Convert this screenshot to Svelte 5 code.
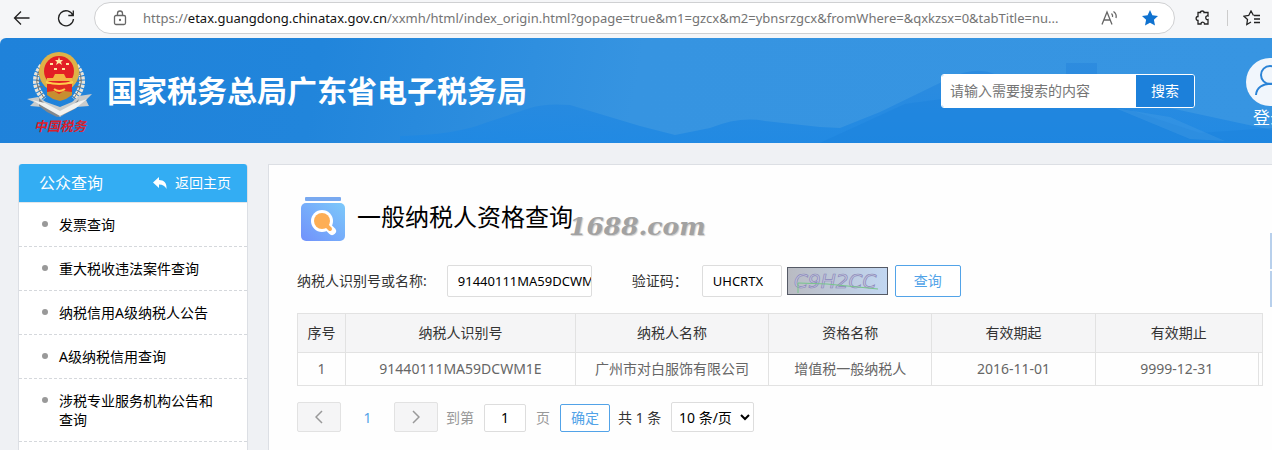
<script>
	const url = {
		scheme: 'https://',
		host: 'etax.guangdong.chinatax.gov.cn',
		path: '/xxmh/html/index_origin.html?gopage=true&m1=gzcx&m2=ybnsrzgcx&fromWhere=&qxkzsx=0&tabTitle=nu...'
	};

	const menu = [
		'发票查询',
		'重大税收违法案件查询',
		'纳税信用A级纳税人公告',
		'A级纳税信用查询',
		'涉税专业服务机构公告和查询'
	];

	const rows = [
		{
			id: '91440111MA59DCWM1E',
			name: '广州市对白服饰有限公司',
			type: '增值税一般纳税人',
			from: '2016-11-01',
			to: '9999-12-31'
		}
	];

	let keyword = $state('');
	let taxpayer = $state('91440111MA59DCWM1E');
	let code = $state('UHCRTX');
	let page = $state('1');
	let size = $state('10');
</script>

<div class="window">
	<!-- Browser toolbar -->
	<div class="toolbar">
		<button class="tool back" aria-label="Back">
			<svg width="18" height="16" viewBox="0 0 18 16"><path d="M16.5 8H1.5M8 1.5L1.5 8L8 14.5" /></svg>
		</button>
		<button class="tool reload" aria-label="Refresh">
			<svg width="18" height="18" viewBox="0 0 18 18"><path d="M16 6.5A7.5 7.5 0 1 0 16.5 10M16.3 1.500V6.5H11.3" /></svg>
		</button>
		<div class="address">
			<svg class="lock" width="14" height="16" viewBox="0 0 14 16">
				<rect x="1.5" y="5.5" width="11" height="9" rx="1.5" />
				<path d="M4.5 5.5V3.5a2.5 2.5 0 0 1 5 0V5.5" />
				<circle cx="7" cy="10" r=".5" />
			</svg>
			<div class="url">{url.scheme}<b>{url.host}</b>{url.path}</div>
			<svg class="read" width="18" height="16" viewBox="0 0 18 16">
				<path d="M1 14.5L6 2L11 14.500M3 10H9M10.500 3.5Q12 5 11.500 7M12.500 1.500Q16 4 15 8" />
			</svg>
			<svg width="18" height="18" viewBox="0 0 18 18">
				<path class="star" d="M9 1l2.4 5.2 5.600.7-4.1 3.9 1.1 5.700L9 13.7l-5 2.8 1.1-5.700L1 6.900l5.600-.7z" />
			</svg>
		</div>
		<button class="tool puzzle" aria-label="Extensions">
			<svg width="16" height="16" viewBox="0 0 16 16">
				<path d="M3 2.500H5.500C5 .5 9.500 .5 9 2.500H13V6C10 5 10 10.500 13 9.500V14H9.500C9.500 11.500 6 11.500 6 14H3V10.500C.5 10.500 .5 6.500 3 6.500Z" />
			</svg>
		</button>
		<span class="divider"></span>
		<button class="tool" aria-label="Favorites">
			<svg width="18" height="16" viewBox="0 0 18 16">
				<path d="M10.5 5.5L8 1L5.7 5.5L1 6.2L4.5 9.5L3.8 14.5L8 12M11 5.5H17M11 9H17M11 12.5H17" />
			</svg>
		</button>
	</div>

	<!-- Banner -->
	<header class="banner">
		<svg class="hills" viewBox="0 0 1272 105" preserveAspectRatio="none" aria-hidden="true">
			<defs>
				<linearGradient id="hill" x1="0" y1="0" x2="0" y2="1">
					<stop offset="0" stop-color="#2c8ade" />
					<stop offset="1" stop-color="#1e88e3" />
				</linearGradient>
			</defs>
			<path fill="url(#hill)" opacity=".85" d="M400 98Q455 97 485 85L530 70Q545 65 570 67L600 76L640 88L675 97L710 90Q740 78 765 83L820 89L840 90L880 74L950 40Q975 28 995 36L1066 38V25H1097V45L1170 70L1272 92V105H400Z" />
			<path fill="#1a7fdb" opacity=".4" d="M820 105L905 66L950 60L1020 70L1080 62L1130 72L1200 95L1272 90V105Z" />
			<path fill="#4fa3e6" opacity=".3" d="M1115 70L1170 79L1225 103L1190 101Z" />
		</svg>

		<a class="brand" href="#home">
			<span class="emblem">
				<svg width="66" height="66" viewBox="0 0 66 66" aria-hidden="true">
					<g fill="none" stroke="#e9e4da" stroke-width="6" stroke-dasharray="3 1">
						<path d="M15 14Q2 30 17 47" />
						<path d="M49 14Q62 30 47 47" />
					</g>
					<g fill="none" stroke="#77756f" stroke-width="1">
						<path d="M14 15Q4 30 17 46M50 15Q60 30 47 46M11 22l5 3M9 28l6 2M10 34l6 1M53 22l-5 3M55 28l-6 2M54 34l-6 1" />
					</g>
					<path fill="#c9cccc" d="M0 47l11-2 8 5 14 5 12-5 7-6 13-2-6 6 3 6-13 1-10 6-6 4-9-5-9-5-12-1 4-4z" />
					<path fill="#83888c" d="M12 46l9 9 12 7 11-7 8-8-4 10-14 7-4 1-10-5-8-6z" />
					<path fill="#f1f2f0" d="M5 48l13 3 15 8 15-8 12-4-11 9-16 8-16-9z" />
					<path fill="#c78e30" d="M20 34h25v9l-6 4-6 2-7-2-6-4z" />
					<circle cx="32" cy="20" r="20" fill="#dfb247" />
					<circle cx="32" cy="19" r="15" fill="#e31f25" />
					<path fill="#ffe9a0" d="M32 5l1 3h3l-2 2 1 3-3-2-3 2 1-3-2-2h3zM23 11h3v2h-3zM39 11h3v2h-3zM27 16h3v2h-3zM35 16h3v2h-3z" />
					<path fill="#f3b542" d="M28 22h9l2 4h6v3H20v-3h6z" />
					<path fill="#e12c22" d="M20 32h25v8l-8-1-5 3-5-3-7 1z" />
					<path fill="none" stroke="#ffcd4a" stroke-width="2" d="M19 30q13 4 27 0M27 37q5 4 11 0" />
				</svg>
				<em>中国税务</em>
			</span>
			<span class="site">国家税务总局广东省电子税务局</span>
		</a>

		<form class="search">
			<input type="text" aria-label="搜索" placeholder="请输入需要搜索的内容" bind:value={keyword} />
			<button type="button">搜索</button>
		</form>

		<a class="login" href="#login">
			<svg width="48" height="48" viewBox="0 0 48 48" aria-hidden="true">
				<circle cx="24" cy="24" r="24" fill="#f1f6fc" />
				<g fill="none" stroke="#2a83d6" stroke-width="2">
					<circle cx="24" cy="17" r="9" />
					<path d="M10 37C11 22 37 22 38 37" />
				</g>
			</svg>
			<span>登录</span>
		</a>
	</header>

	<div class="body">
		<!-- Sidebar -->
		<nav class="sidebar">
			<div class="head">
				<span class="name">公众查询</span>
				<a href="#home">
					<svg width="14" height="12" viewBox="0 0 14 12" aria-hidden="true"><path fill="#fff" d="M6 0v3c5 0 8 3 7.5 9C12 9 10 7.5 6 7.500V11L0 5.5z" /></svg>
					返回主页
				</a>
			</div>
			<ul>
				{#each menu as item}
					<li><a href="#query">{item}</a></li>
				{/each}
			</ul>
		</nav>

		<!-- Query panel -->
		<main class="panel">
			<div class="title">
				<svg width="44" height="44" viewBox="0 0 44 44" aria-hidden="true">
					<defs>
						<linearGradient id="box" x1="0" y1="1" x2="1" y2="0">
							<stop offset="0" stop-color="#7191fb" />
							<stop offset="1" stop-color="#7cc9fa" />
						</linearGradient>
					</defs>
					<rect x="4" y="0" width="36" height="4" rx="1" fill="#79a9f0" />
					<rect x="0" y="6" width="44" height="38" rx="5" fill="url(#box)" />
					<circle cx="21" cy="24" r="11" fill="#fff" />
					<path stroke="#fff" stroke-width="8" stroke-linecap="round" d="M25 28L31 34" />
					<circle cx="21" cy="24" r="8" fill="#fdae55" />
					<path stroke="#fdae55" stroke-width="4" stroke-linecap="round" d="M26 29L29 32" />
				</svg>
				<h1>一般纳税人资格查询</h1>
				<span class="mark">1688.com</span>
			</div>

			<form class="query">
				<label for="taxpayer">纳税人识别号或名称:</label>
				<input id="taxpayer" class="wide" type="text" bind:value={taxpayer} />
				<label for="code">验证码：</label>
				<input id="code" class="short" type="text" bind:value={code} />
				<svg class="captcha" width="101" height="28" viewBox="0 0 101 28" role="img" aria-label="验证码">
					<defs>
						<linearGradient id="noise">
							<stop offset="0" stop-color="#b9bbc2" />
							<stop offset="1" stop-color="#c2d7f2" />
						</linearGradient>
					</defs>
					<rect x=".5" y=".5" width="100" height="27" fill="url(#noise)" stroke="#555a66" />
					<text x="7" y="21">C9H2CC</text>
					<path fill="none" stroke="#78c58c" stroke-width="1" d="M11 26V16L40 17L91 22" />
				</svg>
				<button type="button" class="outline">查询</button>
			</form>

			<table>
				<colgroup>
					<col class="c-index" />
					<col class="c-id" />
					<col class="c-name" />
					<col span="3" />
					<col class="c-gap" />
				</colgroup>
				<thead>
					<tr>
						<th>序号</th>
						<th>纳税人识别号</th>
						<th>纳税人名称</th>
						<th>资格名称</th>
						<th>有效期起</th>
						<th colspan="2">有效期止</th>
					</tr>
				</thead>
				<tbody>
					{#each rows as row, i}
						<tr>
							<td>{i + 1}</td>
							<td>{row.id}</td>
							<td>{row.name}</td>
							<td>{row.type}</td>
							<td>{row.from}</td>
							<td>{row.to}</td>
							<td></td>
						</tr>
					{/each}
				</tbody>
			</table>

			<div class="pager">
				<button class="arrow" aria-label="上一页" disabled>
					<svg width="8" height="14" viewBox="0 0 8 14"><path d="M7 1L1 7L7 13" /></svg>
				</button>
				<a class="current" href="#page">1</a>
				<button class="arrow" aria-label="下一页" disabled>
					<svg width="8" height="14" viewBox="0 0 8 14"><path d="M1 1L7 7L1 13" /></svg>
				</button>
				<label class="muted" for="page">到第</label>
				<input id="page" type="text" bind:value={page} />
				<span class="muted unit">页</span>
				<button class="outline" type="button">确定</button>
				<span class="total">共 1 条</span>
				<select aria-label="每页条数" bind:value={size}>
					<option value="10">10 条/页</option>
					<option value="20">20 条/页</option>
				</select>
			</div>
		</main>
	</div>

	<div class="dock">
		<span></span>
		<span></span>
	</div>
</div>

<style>
	:global(body) {
		margin: 0;
		background: #eff1f4;
	}

	.window {
		position: relative;
		display: flex;
		flex-direction: column;
		overflow: hidden;
		height: 100vh;
		font: 14px/20px 'Noto Sans', 'Noto Sans CJK SC', sans-serif;
		color: #333;
	}

	.window * {
		box-sizing: border-box;
	}

	a {
		color: inherit;
		text-decoration: none;
	}

	button,
	input,
	select {
		margin: 0;
		font: inherit;
	}

	/* Toolbar */
	.toolbar {
		display: flex;
		flex: none;
		align-items: center;
		height: 38px;
		padding: 0 11px 2px 13px;
		background: #f5f6f8;
	}

	.tool {
		display: flex;
		padding: 0;
		border: 0;
		background: none;
	}

	.tool svg,
	.lock,
	.read {
		flex: none;
		fill: none;
		stroke: #222;
		stroke-width: 1.3;
	}

	.reload {
		margin: 0 19px 0 26px;
	}

	.address {
		display: flex;
		flex: 1;
		align-items: center;
		min-width: 0;
		height: 32px;
		padding: 0 15px 0 18px;
		border: 1px solid #cfd0d2;
		border-radius: 16px;
		background: #fff;
	}

	.lock,
	.read {
		stroke: #666;
	}

	.url {
		flex: 1;
		overflow: hidden;
		margin: 0 20px 0 16px;
		color: #747474;
		font-size: 13px;
		white-space: nowrap;
		text-overflow: ellipsis;
	}

	.url b {
		color: #111;
		font-weight: 400;
	}

	.read {
		margin-right: 22px;
	}

	.star {
		fill: #0f72d0;
	}

	.puzzle {
		margin-left: 20px;
	}

	.divider {
		width: 1px;
		height: 16px;
		margin: 0 15px 0 16px;
		background: #ccc;
	}

	/* Banner */
	.banner {
		position: relative;
		display: flex;
		flex: none;
		align-items: center;
		height: 105px;
		border-radius: 6px 0 0 0;
		background: linear-gradient(100deg, #1f82da 0%, #2185db 25%, #3694e1 50%, #3795e2 100%);
	}

	.hills {
		position: absolute;
		inset: 0;
		width: 100%;
		height: 100%;
	}

	.brand,
	.search,
	.login {
		position: relative;
	}

	.brand {
		display: flex;
		align-items: center;
		gap: 14px;
		margin-right: auto;
		padding-left: 27px;
		color: #fff;
	}

	.emblem {
		display: flex;
		flex-direction: column;
		align-items: center;
		padding-top: 4px;
	}

	.emblem em {
		color: #d8202c;
		font-size: 13px;
		font-weight: 700;
		line-height: 16px;
	}

	.site {
		font-size: 30px;
		font-weight: 700;
		line-height: 40px;
		white-space: nowrap;
	}

	.search {
		display: flex;
		width: 254px;
		height: 34px;
		overflow: hidden;
		border: 1px solid #fff;
		border-radius: 3px;
	}

	.search input {
		flex: 1;
		min-width: 0;
		padding: 0 8px;
		border: 0;
		background: #fff;
	}

	.search input::placeholder {
		color: #757575;
	}

	.search button {
		width: 58px;
		padding: 0;
		border: 0;
		background: #1c80da;
		color: #fff;
	}

	.login {
		display: flex;
		flex-direction: column;
		align-items: center;
		margin: 0 -22px 0 51px;
		padding-top: 6px;
		color: #fff;
		font-size: 17px;
		line-height: 24px;
	}

	/* Sidebar */
	.body {
		display: flex;
		flex: 1;
		gap: 20px;
		min-height: 0;
		padding: 21px 0 0 18px;
	}

	.sidebar {
		flex: none;
		width: 230px;
		border: 1px solid #dcdfe4;
		border-width: 0 1px;
		border-radius: 4px 4px 0 0;
		background: #fff;
	}

	.head {
		display: flex;
		align-items: center;
		justify-content: space-between;
		height: 38px;
		padding: 0 16px 0 20px;
		border-radius: 3px 3px 0 0;
		background: #33adf3;
		color: #fff;
	}

	.head a {
		display: flex;
		align-items: center;
		gap: 8px;
	}

	.name {
		font-size: 16px;
	}

	ul {
		margin: 0;
		padding: 0;
		border-top: 1px solid #e3e6ea;
		list-style: none;
	}

	li {
		display: flex;
		gap: 11px;
		min-height: 44px;
		padding: 12px 30px 12px 23px;
		border-bottom: 1px dashed #d5d8dc;
		color: #000;
		line-height: 19px;
	}

	li::before {
		flex: none;
		width: 6px;
		height: 6px;
		margin-top: 6px;
		border-radius: 50%;
		background: #999;
		content: '';
	}

	/* Panel */
	.panel {
		flex: 1;
		min-width: 0;
		padding: 32px 9px 0 28px;
		border: 1px solid #dcdfe4;
		border-width: 1px 0 0 1px;
		background: #fefefe;
	}

	.title {
		display: flex;
		align-items: flex-start;
		height: 44px;
		padding-left: 4px;
	}

	h1 {
		margin: 0 0 0 12px;
		color: #000;
		font-size: 24px;
		font-weight: 400;
		line-height: 40px;
	}

	.mark {
		align-self: flex-end;
		margin-left: -4px;
		color: #a2a2a2;
		font: italic 700 25px/28px 'DejaVu Serif', serif;
		text-shadow: 1px 1px 1px #ccc;
	}

	.query {
		display: flex;
		align-items: center;
		margin: 24px 0 16px;
	}

	.query input,
	.pager input,
	select {
		border: 1px solid #ddd;
		border-radius: 2px;
		background: #fff;
		color: #000;
	}

	.query input {
		height: 32px;
		padding: 0 0 0 10px;
		font-size: 13px;
	}

	.query .wide {
		width: 145px;
		margin: 0 40px 0 20px;
	}

	.query .short {
		width: 80px;
		margin: 0 5px 0 14px;
	}

	.captcha text {
		fill: #c3c5da;
		stroke: #8a88bb;
		stroke-width: 0.7;
		font: italic 20px 'DejaVu Sans', sans-serif;
	}

	.outline {
		padding: 0;
		border: 1px solid #52a3e8;
		border-radius: 2px;
		background: #fff;
		color: #52a3e8;
	}

	.query .outline {
		width: 66px;
		height: 32px;
		margin-left: 7px;
	}

	table {
		width: 100%;
		table-layout: fixed;
		border-collapse: collapse;
	}

	.c-index {
		width: 48px;
	}

	.c-id {
		width: 230px;
	}

	.c-name {
		width: 20%;
	}

	.c-gap {
		width: 4px;
	}

	th,
	td {
		padding: 0;
		border: 1px solid #e2e2e2;
		text-align: center;
		white-space: nowrap;
	}

	th {
		height: 39px;
		background: #f5f5f6;
		font-weight: 400;
	}

	td {
		height: 33px;
		color: #666;
	}

	/* Pager */
	.pager {
		display: flex;
		align-items: flex-end;
		gap: 8px;
		margin-top: 16px;
		line-height: 28px;
	}

	.arrow {
		display: flex;
		align-items: center;
		justify-content: center;
		width: 44px;
		height: 30px;
		border: 1px solid #e2e2e2;
		border-radius: 2px;
		background: #f5f5f6;
	}

	.arrow svg {
		fill: none;
		stroke: #999;
		stroke-width: 1.5;
	}

	.current {
		width: 37px;
		color: #52a3e8;
		text-align: center;
	}

	.muted {
		color: #999;
	}

	.pager input {
		width: 42px;
		height: 28px;
		margin-left: 2px;
		padding: 0;
		text-align: center;
	}

	.unit {
		margin: 0 2px;
	}

	.pager .outline {
		width: 50px;
		height: 28px;
		line-height: 24px;
	}

	.total {
		min-width: 45px;
	}

	select {
		width: 83px;
		height: 30px;
		padding: 0 0 0 3px;
	}

	/* Floating shortcuts on the right edge */
	.dock {
		position: absolute;
		top: 233px;
		right: 0;
		display: grid;
		gap: 2px;
	}

	.dock span {
		width: 2px;
		height: 36px;
		background: #b8d0ec;
	}
</style>
